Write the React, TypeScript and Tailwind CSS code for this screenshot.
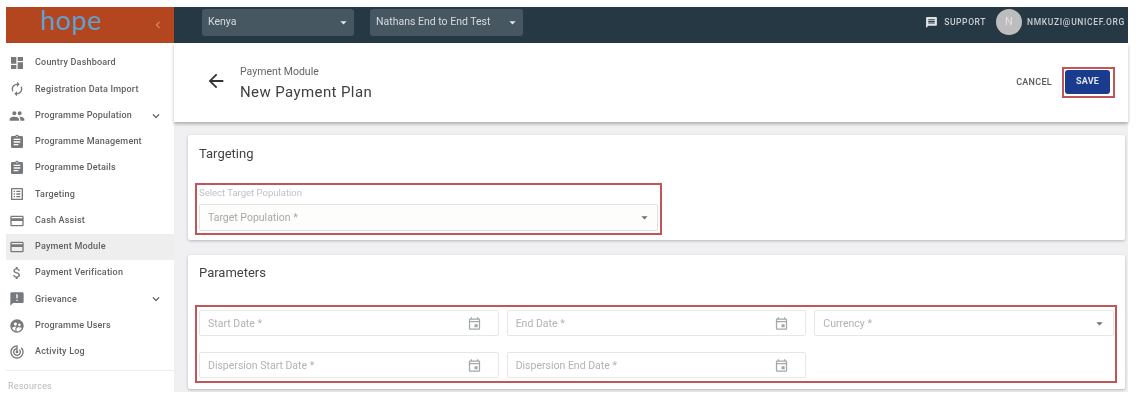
import type { ReactNode } from "react";
import type { IconType } from "react-icons";
import {
  MdDashboard,
  MdAutorenew,
  MdPeople,
  MdAssignment,
  MdOutlineListAlt,
  MdCreditCard,
  MdAttachMoney,
  MdAnnouncement,
  MdSupervisedUserCircle,
  MdTrackChanges,
  MdExpandMore,
  MdChevronLeft,
  MdArrowDropDown,
  MdArrowBack,
  MdOutlineEvent,
  MdMessage,
} from "react-icons/md";

const NAV_ITEMS: { label: string; icon: IconType; expand?: boolean; active?: boolean }[] = [
  { label: "Country Dashboard", icon: MdDashboard },
  { label: "Registration Data Import", icon: MdAutorenew },
  { label: "Programme Population", icon: MdPeople, expand: true },
  { label: "Programme Management", icon: MdAssignment },
  { label: "Programme Details", icon: MdAssignment },
  { label: "Targeting", icon: MdOutlineListAlt },
  { label: "Cash Assist", icon: MdCreditCard },
  { label: "Payment Module", icon: MdCreditCard, active: true },
  { label: "Payment Verification", icon: MdAttachMoney },
  { label: "Grievance", icon: MdAnnouncement, expand: true },
  { label: "Programme Users", icon: MdSupervisedUserCircle },
  { label: "Activity Log", icon: MdTrackChanges },
];

function NavRow({ item }: { item: (typeof NAV_ITEMS)[number] }) {
  const Icon = item.icon;
  return (
    <div className={`flex h-[26.25px] items-center pl-[3px] pr-[11px] ${item.active ? "bg-[#eeeeef]" : ""}`}>
      <Icon className="h-[16px] w-[16px] shrink-0 text-[#777a7d]" />
      <span className="ml-[10px] flex-1 text-[9px] font-medium tracking-[0.2px] text-[#5f6163]">{item.label}</span>
      {item.expand && <MdExpandMore className="h-[14px] w-[14px] text-[#4a4d50]" />}
    </div>
  );
}

function Sidebar() {
  return (
    <aside className="w-[168px] shrink-0 bg-white">
      <div className="flex h-[36px] items-center bg-[#b4461f] pr-[9px] pl-[34px]">
        <span className="flex-1 pb-[11px] font-['Lato',sans-serif] text-[27px] leading-none tracking-[0.5px] text-[#5ba3d4]">hope</span>
        <MdChevronLeft className="h-[14px] w-[14px] text-[#d98a5f]" />
      </div>
      <nav className="pt-[7px]">
        {NAV_ITEMS.map((item) => (
          <NavRow key={item.label} item={item} />
        ))}
      </nav>
      <div className="mt-[5px] h-px bg-[#efefef]" />
      <div className="mt-[9px] pl-[2px] text-[9px] tracking-[0.2px] text-[#b5b7b9]">Resources</div>
    </aside>
  );
}

function TopSelect({ label, width }: { label: string; width: string }) {
  return (
    <div className={`flex h-[27px] items-center rounded-[3px] bg-[#475762] pl-[6px] pr-[3px] ${width}`}>
      <span className="flex-1 text-[10.5px] text-[#d6dbde]">{label}</span>
      <MdArrowDropDown className="h-[15px] w-[15px] text-[#e4e7e9]" />
    </div>
  );
}

function TopBar() {
  return (
    <header className="flex h-[36px] items-center bg-[#263843] pb-[6px] pl-[28px] pr-[3px]">
      <TopSelect label="Kenya" width="w-[152px]" />
      <div className="ml-[16px]">
        <TopSelect label="Nathans End to End Test" width="w-[153px]" />
      </div>
      <div className="ml-auto flex items-center">
        <MdMessage className="h-[13px] w-[13px] text-[#dfe3e5]" />
        <span className="ml-[6px] text-[8.5px] font-medium tracking-[0.6px] text-[#c9ced1]">SUPPORT</span>
        <div className="ml-[10px] flex h-[26px] w-[26px] items-center justify-center rounded-full bg-[#bdbdbd] text-[11px] text-[#e3e3e3]">
          N
        </div>
        <span className="ml-[5px] text-[8.5px] font-medium tracking-[0.65px] text-[#c9ced1]">NMKUZI@UNICEF.ORG</span>
      </div>
    </header>
  );
}

function PageHeader() {
  return (
    <div className="flex h-[79px] items-center bg-white pl-[31px] pr-[13px] shadow-[0_2px_3px_rgba(0,0,0,0.28)]">
      <MdArrowBack className="-mt-[4px] h-[22px] w-[22px] text-[#333333]" />
      <div className="ml-[13px]">
        <div className="text-[10.5px] leading-[14px] text-[#636567]">Payment Module</div>
        <div className="mt-[4px] text-[15px] leading-[18px] tracking-[0.4px] text-[#3d3f41]">New Payment Plan</div>
      </div>
      <div className="ml-auto flex items-center">
        <span className="text-[9px] font-medium tracking-[0.3px] text-[#55585a]">CANCEL</span>
        <div className="ml-[10px] border-2 border-[#c0565a] pt-px pr-[3px] pb-[2px] pl-px">
          <button className="flex h-[24px] w-[45px] items-center justify-center rounded-[3px] bg-[#1a3b8e] text-[9px] font-bold tracking-[0.2px] text-[#dfe5f2]">
            SAVE
          </button>
        </div>
      </div>
    </div>
  );
}

function Field({ label, trailing }: { label: string; trailing?: "date" | "select" }) {
  return (
    <div className="flex h-[26px] items-center rounded-[2px] border border-[#e6e7ea] bg-white pl-[8px] pr-[16px]">
      <span className="flex-1 pt-px text-[10.5px] text-[#b0b2b4]">{label}</span>
      {trailing === "date" && <MdOutlineEvent className="h-[15px] w-[15px] text-[#a3a7a8]" />}
      {trailing === "select" && <MdArrowDropDown className="-mr-[10px] h-[15px] w-[15px] text-[#6c6f71]" />}
    </div>
  );
}

function Card({ title, className, children }: { title: string; className: string; children: ReactNode }) {
  return (
    <section className={`rounded-[2px] bg-white pl-[7px] pr-[8px] shadow-[0_1px_3px_rgba(0,0,0,0.25)] ${className}`}>
      <h2 className="pl-[4px] text-[13px] leading-[18px] text-[#414345]">{title}</h2>
      {children}
    </section>
  );
}

function Content() {
  return (
    <main className="flex-1 bg-[#f0f0f2]">
      <PageHeader />
      <div className="flex flex-col gap-[15px] pl-[14px] pr-[3px] pt-[13px]">
        <Card title="Targeting" className="h-[105px] pt-[10px]">
          <div className="mt-[20px] h-[52px] w-[467px] border-2 border-[#c0565a] px-[2px]">
            <div className="text-[9.5px] leading-[16px] text-[#bfc1c3]">Select Target Population</div>
            <div className="mt-[3px] flex h-[27px] items-center rounded-[2px] border border-[#dfe2df] bg-[#fdfefc] pl-[8px] pr-[5px]">
              <span className="flex-1 text-[10.5px] text-[#a6a8aa]">Target Population *</span>
              <MdArrowDropDown className="h-[15px] w-[15px] text-[#6c6f71]" />
            </div>
          </div>
        </Card>
        <Card title="Parameters" className="h-[134px] pt-[9px]">
          <div className="mt-[23px] grid h-[78px] grid-cols-3 content-start gap-x-[8px] gap-y-[16px] border-2 border-[#c0565a] pt-[3px] pr-px pl-[2px]">
            <Field label="Start Date *" trailing="date" />
            <Field label="End Date *" trailing="date" />
            <Field label="Currency *" trailing="select" />
            <Field label="Dispersion Start Date *" trailing="date" />
            <Field label="Dispersion End Date *" trailing="date" />
          </div>
        </Card>
      </div>
    </main>
  );
}

export default function App() {
  return (
    <div className="h-[404px] w-[1140px] overflow-hidden bg-white pl-[6px] pr-[12px] pt-[7px] font-['Roboto',sans-serif] blur-[0.35px]">
      <div className="flex h-[385px]">
        <Sidebar />
        <div className="flex min-w-0 flex-1 flex-col">
          <TopBar />
          <Content />
        </div>
      </div>
    </div>
  );
}
